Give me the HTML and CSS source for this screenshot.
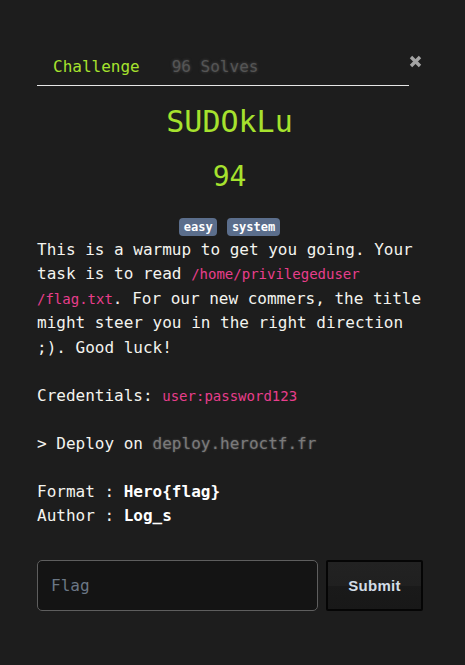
FILE: index.html
```html
<!DOCTYPE html>
<html lang="en">
<head>
<meta charset="utf-8">
<title>SUDOkLu</title>
<link rel="stylesheet" href="styles.css">
</head>
<body>
<div class="modal">
  <div class="header">
    <ul class="tabs">
      <li class="tab active">Challenge</li>
      <li class="tab muted">96 Solves</li>
    </ul>
    <span class="close" aria-label="Close">
      <svg width="13" height="13" viewBox="0 0 13 13"><path d="M2 2 L11 11 M11 2 L2 11" stroke="#a3a3a3" stroke-width="3.4" stroke-linecap="butt"/></svg>
    </span>
  </div>
  <h1 class="title">SUDOkLu</h1>
  <div class="points">94</div>
  <div class="tags"><span class="badge">easy</span> <span class="badge">system</span></div>
  <div class="desc">
    <p>This is a warmup to get you going. Your<br>task is to read <code>/home/privilegeduser</code><br><code>/flag.txt</code>. For our new commers, the title<br>might steer you in the right direction<br>;). Good luck!</p>
    <p>Credentials: <code>user:password123</code></p>
    <p>&gt; Deploy on <span class="host">deploy.heroctf.fr</span></p>
    <p>Format : <strong>Hero{flag}</strong><br>Author : <strong>Log_s</strong></p>
  </div>
  <form class="flag-form">
    <input class="flag-input" type="text" placeholder="Flag">
    <button class="submit" type="button">Submit</button>
  </form>
</div>
</body>
</html>
```
FILE: styles.css
```css
html, body {
  margin: 0;
  padding: 0;
}
body {
  background-color: #1d1d1d;
  color: #f4f4ef;
  font-family: "DejaVu Sans Mono", monospace;
  font-size: 16px;
  width: 465px;
  height: 665px;
  overflow: hidden;
}
.modal {
  padding: 47px 43px 0 37px;
}
.header {
  display: flex;
  align-items: flex-start;
}
.tabs {
  flex: 1;
  display: flex;
  list-style: none;
  margin: 0;
  padding: 0;
  border-bottom: 1px solid #e6e6e6;
}
.tab {
  padding: 8px 16px 6px;
  line-height: 24px;
}
.tab.active {
  color: #a6e22e;
}
.tab.muted {
  color: #555555;
  text-shadow: 0 0 3px rgba(85, 85, 85, 0.9);
}
.close {
  display: block;
  width: 13px;
  height: 13px;
  margin-top: 8px;
  margin-left: 0;
}
.close svg {
  display: block;
}
.title {
  margin: 18px 0 0;
  text-align: center;
  font-size: 30px;
  line-height: 36px;
  font-weight: normal;
  color: #a6e22e;
}
.points {
  margin-top: 20px;
  text-align: center;
  font-size: 28px;
  line-height: 34px;
  color: #a6e22e;
}
.tags {
  margin-top: 23.5px;
  text-align: center;
  font-size: 12px;
  line-height: 18px;
  height: 18px;
  word-spacing: 3px;
}
.badge {
  display: inline-block;
  vertical-align: top;
  background-color: #5b6e8c;
  color: #ffffff;
  font-weight: bold;
  font-size: 12px;
  line-height: 12px;
  padding: 3px 4.5px;
  border-radius: 4px;
  word-spacing: 0;
}
.desc {
  margin-top: 2px;
  width: 385px;
}
.desc p {
  margin: 0 0 23.5px;
  line-height: 24.5px;
}
.desc p:last-child {
  margin-bottom: 0;
}
code {
  font-family: "DejaVu Sans Mono", monospace;
  font-size: 14px;
  line-height: 16px;
  color: #e83e8c;
}
.host {
  color: #7a7a7a;
  text-shadow: 0 0 2px rgba(120, 120, 120, 0.7);
}
strong {
  font-weight: bold;
  color: #ffffff;
}
.flag-form {
  display: flex;
  gap: 8px;
  margin-top: 31px;
  width: 386px;
}
.flag-input {
  flex: 1;
  min-width: 0;
  height: 51px;
  box-sizing: border-box;
  background-color: #141414;
  border: 1px solid #5e5e5e;
  border-radius: 5px;
  padding: 0 13px;
  font-family: "DejaVu Sans Mono", monospace;
  font-size: 16px;
  color: #eeeeee;
  outline: none;
}
.flag-input::placeholder {
  color: #6b7785;
}
.submit {
  width: 97px;
  height: 51px;
  box-sizing: border-box;
  border: 2px solid #050505;
  border-radius: 2px;
  background: linear-gradient(to bottom, #222222 0%, #202020 50%, #1a1a1a 50%, #181818 100%);
  color: #d2dce6;
  font-family: "Liberation Sans", Arial, sans-serif;
  font-weight: bold;
  font-size: 15px;
  letter-spacing: 0.3px;
  padding: 0;
}
```
